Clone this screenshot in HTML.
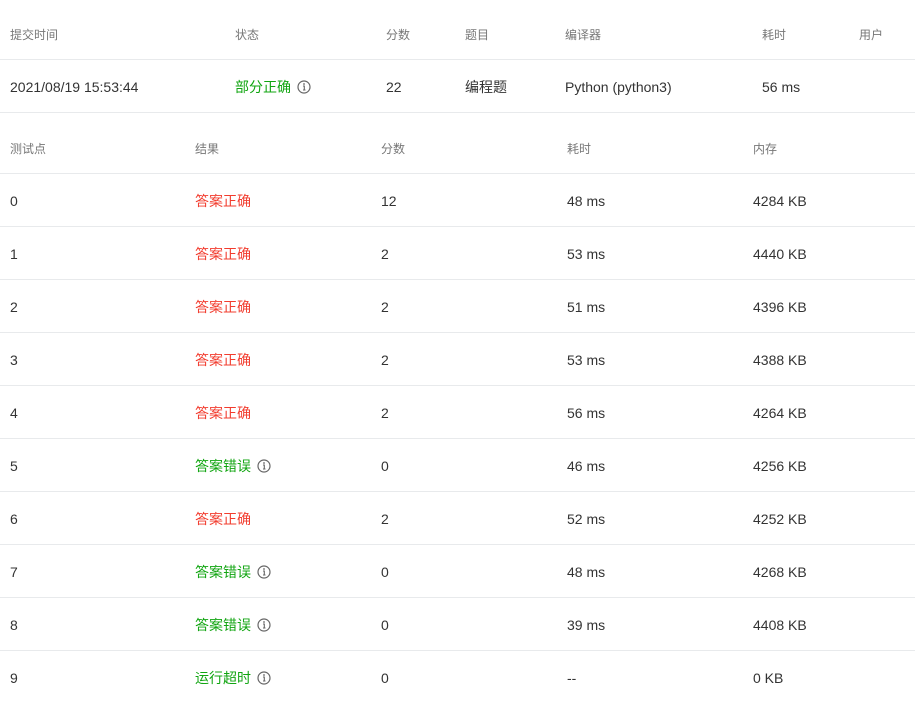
<!DOCTYPE html>
<html><head><meta charset="utf-8"><style>
body{margin:0;width:915px;height:701px;background:#fff;font-family:"Liberation Sans","Noto Sans CJK SC",sans-serif;position:relative;overflow:hidden}
.t{position:absolute;white-space:nowrap;line-height:16px}
.h{font-size:12px;color:#777}
.b{font-size:14px;color:#333}
.g{color:#11a511}.r{color:#f23c2e}
.l{position:absolute;left:0;width:915px;height:1px;background:#e8eaec}
.i{display:inline-block;vertical-align:-2px;margin-left:6px}
</style></head><body>
<div class="t h" style="left:10px;top:27px">提交时间</div>
<div class="t h" style="left:235px;top:27px">状态</div>
<div class="t h" style="left:386px;top:27px">分数</div>
<div class="t h" style="left:465px;top:27px">题目</div>
<div class="t h" style="left:565px;top:27px">编译器</div>
<div class="t h" style="left:762px;top:27px">耗时</div>
<div class="t h" style="left:859px;top:27px">用户</div>
<div class="l" style="top:59px"></div>
<div class="t b" style="left:10px;top:79px">2021/08/19 15:53:44</div>
<div class="t b g" style="left:235px;top:79px">部分正确<svg class="i" width="14" height="14" viewBox="0 0 14 14"><circle cx="7" cy="7" r="6" fill="none" stroke="#666" stroke-width="1.2"/><circle cx="7" cy="4" r="0.9" fill="#666"/><path d="M6 6h1.3v4M6 10h2.5" stroke="#666" stroke-width="1.1" fill="none"/></svg></div>
<div class="t b" style="left:386px;top:79px">22</div>
<div class="t b" style="left:465px;top:79px">编程题</div>
<div class="t b" style="left:565px;top:79px">Python (python3)</div>
<div class="t b" style="left:762px;top:79px">56 ms</div>
<div class="l" style="top:112px"></div>
<div class="t h" style="left:10px;top:141px">测试点</div>
<div class="t h" style="left:195px;top:141px">结果</div>
<div class="t h" style="left:381px;top:141px">分数</div>
<div class="t h" style="left:567px;top:141px">耗时</div>
<div class="t h" style="left:753px;top:141px">内存</div>
<div class="l" style="top:173px"></div>
<div id="rows"></div>
<script>
var d=[["0","答案正确",0,"12","48 ms","4284 KB"],["1","答案正确",0,"2","53 ms","4440 KB"],["2","答案正确",0,"2","51 ms","4396 KB"],["3","答案正确",0,"2","53 ms","4388 KB"],["4","答案正确",0,"2","56 ms","4264 KB"],["5","答案错误",1,"0","46 ms","4256 KB"],["6","答案正确",0,"2","52 ms","4252 KB"],["7","答案错误",1,"0","48 ms","4268 KB"],["8","答案错误",1,"0","39 ms","4408 KB"],["9","运行超时",1,"0","--","0 KB"]];
var ic='<svg class="i" width="14" height="14" viewBox="0 0 14 14"><circle cx="7" cy="7" r="6" fill="none" stroke="#666" stroke-width="1.2"/><circle cx="7" cy="4" r="0.9" fill="#666"/><path d="M6 6h1.3v4M6 10h2.5" stroke="#666" stroke-width="1.1" fill="none"/></svg>';
var h='';d.forEach(function(r,k){var y=193+53*k;
h+='<div class="t b" style="left:10px;top:'+y+'px">'+r[0]+'</div>';
h+='<div class="t b '+(r[2]?'g':'r')+'" style="left:195px;top:'+y+'px">'+r[1]+(r[2]?ic:'')+'</div>';
h+='<div class="t b" style="left:381px;top:'+y+'px">'+r[3]+'</div>';
h+='<div class="t b" style="left:567px;top:'+y+'px">'+r[4]+'</div>';
h+='<div class="t b" style="left:753px;top:'+y+'px">'+r[5]+'</div>';
if(k<9)h+='<div class="l" style="top:'+(226+53*k)+'px"></div>';});
document.getElementById('rows').innerHTML=h;
</script>
</body></html>
